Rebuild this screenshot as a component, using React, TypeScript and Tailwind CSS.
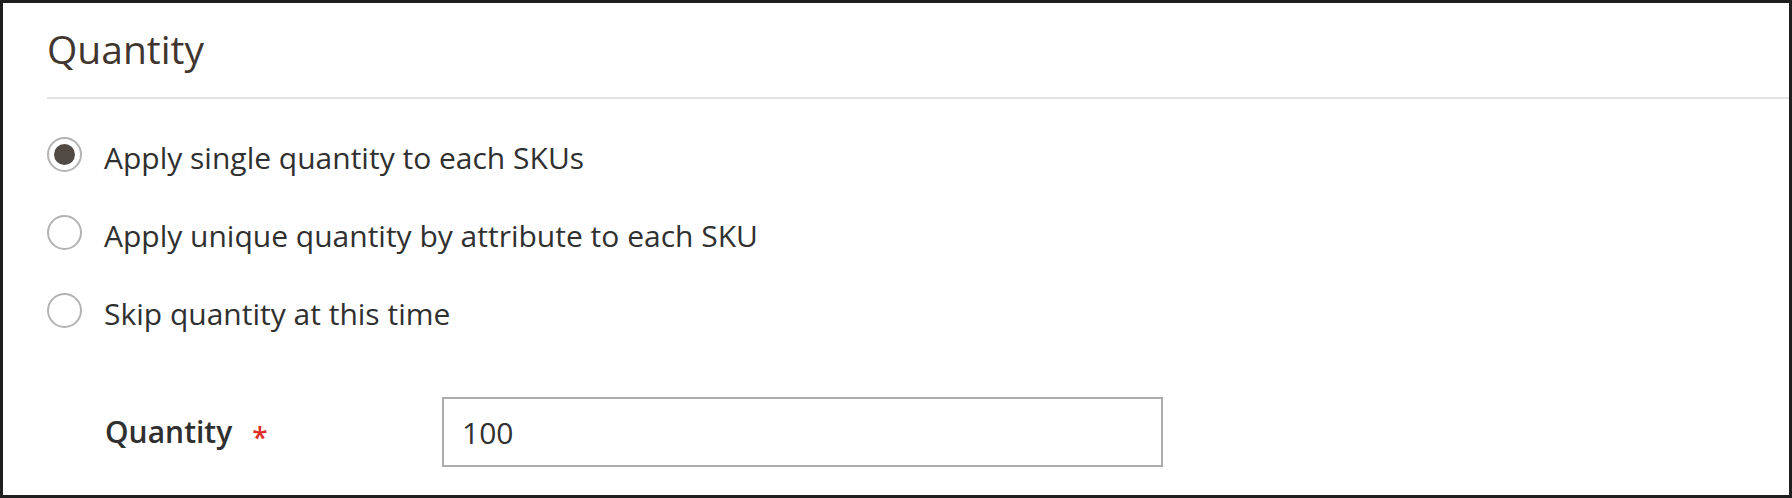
const options = [
  { label: "Apply single quantity to each SKUs", checked: true },
  { label: "Apply unique quantity by attribute to each SKU", checked: false },
  { label: "Skip quantity at this time", checked: false },
];

function Radio({ checked }: { checked: boolean }) {
  return (
    <span className="mb-[8px] flex h-[35px] w-[35px] shrink-0 items-center justify-center rounded-full border-2 border-[#b3b3b3] bg-white">
      {checked && <span className="h-[21px] w-[21px] rounded-full bg-[#514943]" />}
    </span>
  );
}

export default function App() {
  return (
    <div className="box-border h-[498px] w-[1792px] overflow-hidden border-[3px] border-[#1f1f1f] bg-white pl-[44px] font-['Open_Sans',sans-serif]">
      <div className="border-b-2 border-[#e3e3e3] pt-[23px] pb-[25px]">
        <h2 className="text-[39px] font-normal leading-[46px] text-[#41362f]">Quantity</h2>
      </div>

      {/* quantity mode */}
      <div className="mt-[20px] flex flex-col">
        {options.map((o) => (
          <label key={o.label} className="flex h-[78px] items-center gap-[22px] text-[30px] leading-[40px] text-[#303030]">
            <Radio checked={o.checked} />
            <span>{o.label}</span>
          </label>
        ))}
      </div>

      <div className="mt-[44px] flex h-[70px] items-center">
        <div className="flex w-[395px] items-center pl-[58px] text-[30px] font-semibold leading-[40px] text-[#303030]">
          <span>Quantity</span>
          <span className="ml-[20px] mt-[10px] text-[28px] leading-[40px] text-[#e02b27]">*</span>
        </div>
        <input
          type="text"
          defaultValue="100"
          className="box-border h-[70px] w-[721px] border-2 border-[#adadad] bg-white pl-[18px] text-[30px] text-[#303030] outline-none"
        />
      </div>
    </div>
  );
}
